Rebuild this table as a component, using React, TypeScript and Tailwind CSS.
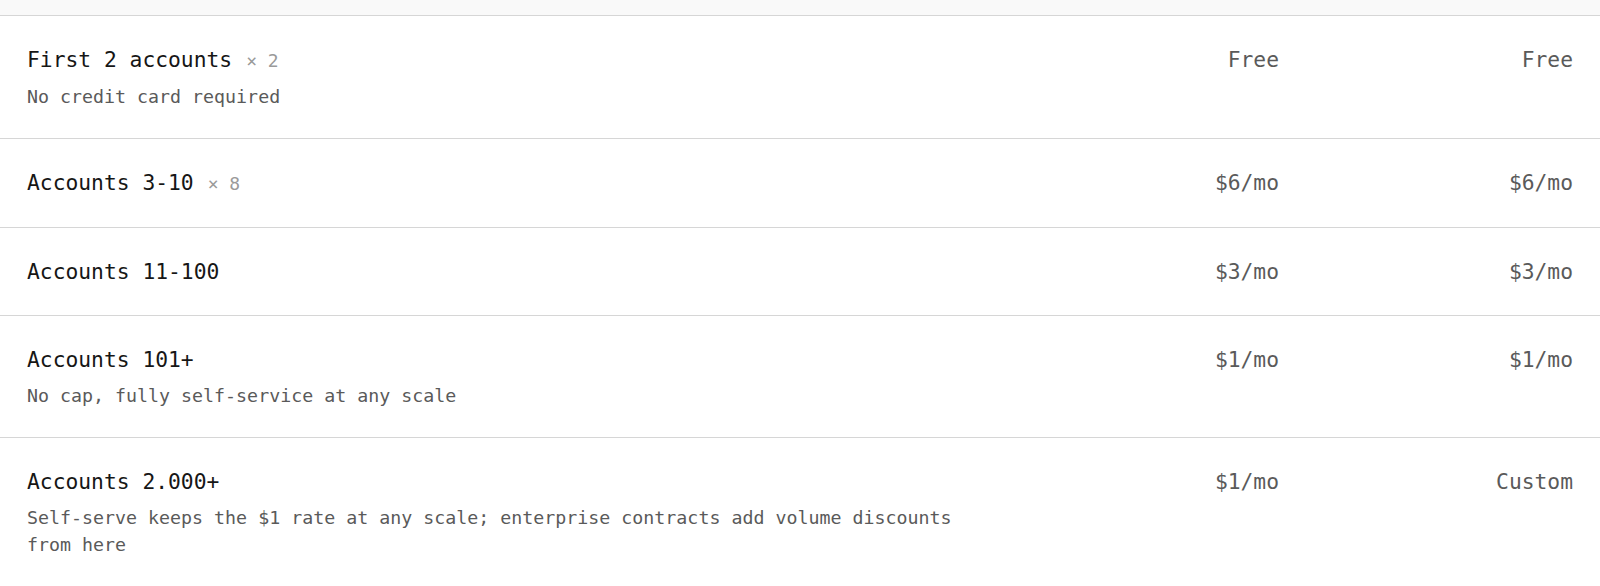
import React from "react";

type Row = {
  title: string;
  mult?: string;
  sub?: string;
  a: string;
  b: string;
};

const rows: Row[] = [
  { title: "First 2 accounts", mult: "× 2", sub: "No credit card required", a: "Free", b: "Free" },
  { title: "Accounts 3-10", mult: "× 8", a: "$6/mo", b: "$6/mo" },
  { title: "Accounts 11-100", a: "$3/mo", b: "$3/mo" },
  { title: "Accounts 101+", sub: "No cap, fully self-service at any scale", a: "$1/mo", b: "$1/mo" },
  {
    title: "Accounts 2.000+",
    sub: "Self-serve keeps the $1 rate at any scale; enterprise contracts add volume discounts from here",
    a: "$1/mo",
    b: "Custom",
  },
];

export default function App() {
  return (
    <div
      className="w-[1600px] min-h-[586px] bg-white"
      style={{ fontFamily: '"DejaVu Sans Mono", "Liberation Mono", monospace' }}
    >
      <div className="h-[16px] bg-[#f9f9f9] border-b border-[#d6d6d6]" />
      {rows.map((r, i) => (
        <div
          key={i}
          className="grid grid-cols-[1fr_294px_294px] px-[27px] py-[28px] border-b border-[#d6d6d6]"
        >
          <div>
            <div className="text-[21.3px] leading-[31px] text-[#161616]">
              {r.title}
              {r.mult && (
                <span className="ml-[14px] text-[18px] text-[#9a9a9a]">{r.mult}</span>
              )}
            </div>
            {r.sub && (
              <div className="mt-[7px] text-[18.3px] leading-[27px] text-[#5a5a5a]">{r.sub}</div>
            )}
          </div>
          <div className="text-right text-[21.3px] leading-[31px] text-[#5a5a5a]">{r.a}</div>
          <div className="text-right text-[21.3px] leading-[31px] text-[#5a5a5a]">{r.b}</div>
        </div>
      ))}
    </div>
  );
}
